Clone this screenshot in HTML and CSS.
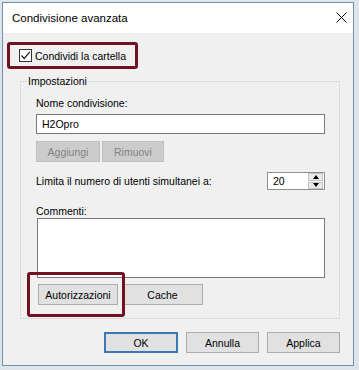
FILE: index.html
```html
<!DOCTYPE html>
<html lang="it">
<head>
<meta charset="utf-8">
<title>Condivisione avanzata</title>
<link rel="stylesheet" href="styles.css">
</head>
<body>
<div class="window">
  <div class="titlebar">
    <span class="title">Condivisione avanzata</span>
    <svg class="close" width="11" height="11" viewBox="0 0 11 11"><path d="M0.5 0.5 L10.5 10.5 M10.5 0.5 L0.5 10.5" stroke="#000" stroke-width="1" fill="none"/></svg>
  </div>
  <div class="content">
    <div class="share highlight">
      <span class="checkbox"><svg width="11" height="11" viewBox="0 0 11 11"><path d="M1.5 5.5 L4.2 8.5 L9.8 1.8" stroke="#222" stroke-width="1.2" fill="none"/></svg></span>
      <span class="share-label">Condividi la cartella</span>
    </div>
    <div class="group">
      <span class="legend">Impostazioni</span>
      <div class="label">Nome condivisione:</div>
      <div class="textbox">H2Opro</div>
      <div class="btn-row">
        <button class="btn disabled aggiungi" disabled>Aggiungi</button>
        <button class="btn disabled rimuovi" disabled>Rimuovi</button>
      </div>
      <div class="limit-row">
        <span>Limita il numero di utenti simultanei a:</span>
        <div class="spin">
          <span class="spin-val">20</span>
          <div class="spin-btns">
            <span class="spin-btn"><span class="arrow-up"></span></span>
            <span class="spin-btn"><span class="arrow-down"></span></span>
          </div>
        </div>
      </div>
      <div class="label comments-label">Commenti:</div>
      <div class="textarea"></div>
      <div class="btn-row perm-row">
        <button class="btn perm">Autorizzazioni</button>
        <button class="btn cache">Cache</button>
        <span class="highlight-box"></span>
      </div>
    </div>
    <div class="footer">
      <button class="btn foot default">OK</button>
      <button class="btn foot">Annulla</button>
      <button class="btn foot">Applica</button>
    </div>
  </div>
</div>
</body>
</html>
```
FILE: styles.css
```css
* { box-sizing: border-box; }
html, body { margin: 0; padding: 0; }
body {
  background: #dfe4ea;
  width: 359px;
  height: 370px;
  overflow: hidden;
  font-family: "Liberation Sans", Arial, sans-serif;
  font-size: 10.5px;
  color: #000;
}
.window {
  margin: 2px 0 0 2px;
  width: 352px;
  height: 364px;
  border: 1px solid #6f8fb2;
  background: #f0f0f0;
  display: flex;
  flex-direction: column;
}
.titlebar {
  height: 30px;
  background: #fff;
  display: flex;
  align-items: center;
  justify-content: space-between;
  padding: 0 6px 0 9px;
}
.title { font-size: 11.5px; }
.close { display: block; margin-top: -2px; }
.content {
  padding: 9px 13px 12px 4px;
  display: flex;
  flex-direction: column;
  flex: 1;
}
.highlight {
  border: 3px solid #701221;
  border-radius: 3px;
}
.share {
  align-self: flex-start;
  width: 131px;
  height: 27px;
  display: flex;
  align-items: center;
  padding-left: 9px;
}
.checkbox {
  width: 13px;
  height: 13px;
  border: 1px solid #333;
  background: #fff;
  display: flex;
  align-items: center;
  justify-content: center;
  margin-right: 3px;
}
.checkbox svg { display: block; }
.group {
  position: relative;
  margin: 12px 0 0 13px;
  width: 320px;
  border: 1px solid #dcdcdc;
  padding: 14px 14px 13px 15px;
}
.legend {
  position: absolute;
  top: -8px;
  left: 6px;
  padding: 0 1px;
  background: #f0f0f0;
  line-height: 15px;
}
.label { line-height: 15px; }
.textbox {
  margin-top: 3px;
  height: 20px;
  border: 1px solid #7a7a7a;
  background: #fff;
  padding-left: 5px;
  line-height: 18px;
}
.btn-row {
  display: flex;
  gap: 2px;
  margin-top: 7px;
}
.btn {
  font: inherit;
  height: 21px;
  padding: 0;
  background: #e1e1e1;
  border: 1px solid #adadad;
  color: #000;
}
.btn.disabled {
  background: #cccccc;
  border-color: #bfbfbf;
  color: #838383;
}
.aggiungi { width: 64px; }
.rimuovi { width: 62px; }
.limit-row {
  margin-top: 10px;
  display: flex;
  align-items: center;
  justify-content: space-between;
}
.spin {
  width: 58px;
  height: 18px;
  border: 1px solid #8f8f8f;
  background: #fff;
  display: flex;
  justify-content: space-between;
}
.spin-val { padding-left: 5px; line-height: 16px; }
.spin-btns {
  width: 16px;
  display: flex;
  flex-direction: column;
  gap: 1px;
  padding: 0 1px 0 0;
}
.spin-btn {
  flex: 1;
  background: #e9e9e9;
  border: 1px solid #c4c4c4;
  display: flex;
  align-items: center;
  justify-content: center;
}
.arrow-up {
  width: 0; height: 0;
  border-left: 3px solid transparent;
  border-right: 3px solid transparent;
  border-bottom: 4px solid #000;
}
.arrow-down {
  width: 0; height: 0;
  border-left: 3px solid transparent;
  border-right: 3px solid transparent;
  border-top: 4px solid #000;
}
.comments-label { margin-top: 14px; line-height: 14px; }
.textarea {
  height: 60px;
  margin-left: 1px;
  border: 1px solid #7a7a7a;
  background: #fff;
}
.perm-row {
  position: relative;
  margin-top: 6px;
  gap: 4px;
}
.perm { width: 80px; margin-left: 2px; }
.cache { width: 81px; }
.highlight-box {
  position: absolute;
  left: -9px;
  top: -12px;
  width: 98px;
  height: 45px;
  border: 3px solid #701221;
  border-radius: 3px;
}
.footer {
  margin-top: 13px;
  display: flex;
  justify-content: flex-end;
  gap: 8px;
}
.foot { width: 73px; }
.default { width: 74px; border: 2px solid #3a78b3; }
```
